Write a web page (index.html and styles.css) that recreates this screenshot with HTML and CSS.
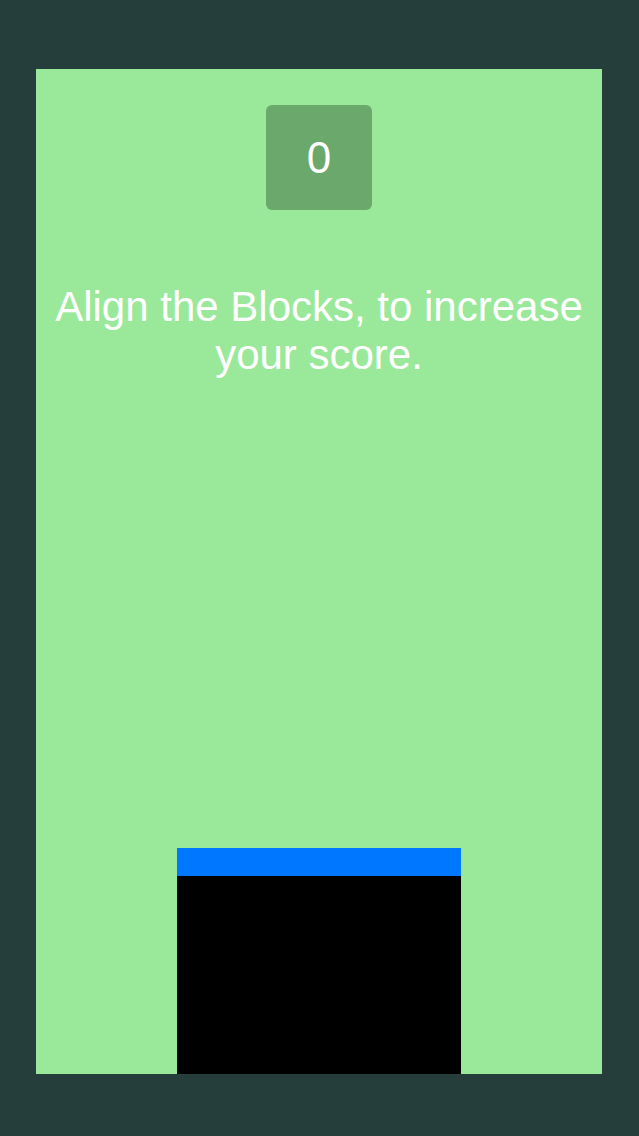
FILE: index.html
```html
<!DOCTYPE html>
<html>
<head>
<meta charset="utf-8">
<link rel="stylesheet" href="styles.css">
</head>
<body>
<div class="panel">
  <div class="score">0</div>
  <div class="hint">Align the Blocks, to increase your score.</div>
  <div class="stack">
    <div class="block moving"></div>
    <div class="block base"></div>
  </div>
</div>
</body>
</html>
```
FILE: styles.css
```css
html, body {
  margin: 0;
  padding: 0;
  background: #253d3b;
  height: 100%;
}
body {
  padding-top: 69px;
  box-sizing: border-box;
}
.panel {
  margin-left: 36px;
  width: 566px;
  height: 1005px;
  background: #9ae899;
  display: flex;
  flex-direction: column;
  align-items: center;
  font-family: "Liberation Sans", Arial, sans-serif;
  color: #ffffff;
}
.score {
  margin-top: 36px;
  width: 106px;
  height: 105px;
  border-radius: 6px;
  background: #6aa86c;
  display: flex;
  align-items: center;
  justify-content: center;
  font-size: 44px;
}
.hint {
  margin-top: 73px;
  font-size: 42px;
  line-height: 48px;
  text-align: center;
  width: 560px;
}
.stack {
  margin-top: auto;
  width: 284px;
  display: flex;
  flex-direction: column;
}
.block.moving {
  height: 28px;
  background: #0077ff;
}
.block.base {
  height: 198px;
  background: #000000;
}
```
